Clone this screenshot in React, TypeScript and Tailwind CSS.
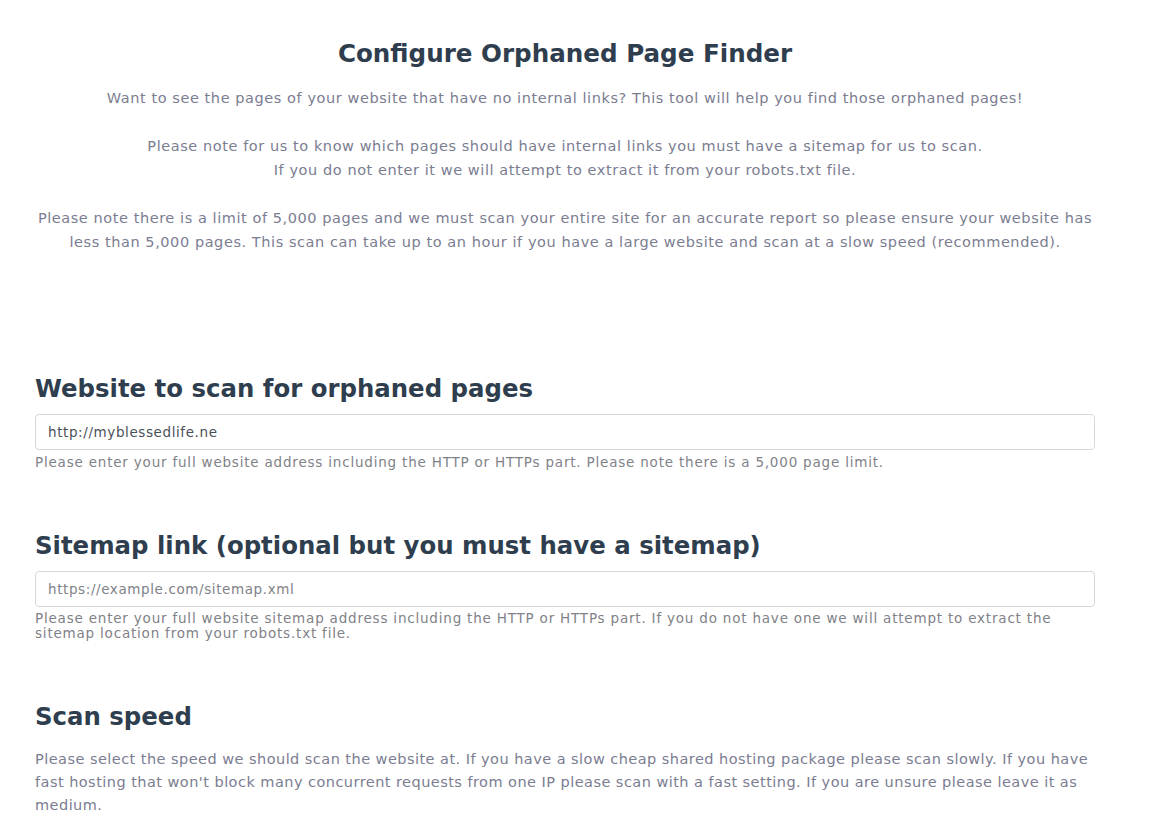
export default function App() {
  return (
    <div className="min-h-screen bg-white font-['DejaVu_Sans',sans-serif] text-[#7b7d91]">
      <div className="mx-[35px] w-[1060px]">
        {/* Intro */}
        <div className="pt-[38px] text-center">
          <h1 className="text-[24.6px] font-semibold leading-[32px] text-[#2f3e4e]">Configure Orphaned Page Finder</h1>
          <div className="mt-[16px] space-y-[24px] text-[14.5px] leading-[24px] tracking-[0.57px]">
            <p>Want to see the pages of your website that have no internal links? This tool will help you find those orphaned pages!</p>
            <p>
              Please note for us to know which pages should have internal links you must have a sitemap for us to scan.
              <br />
              If you do not enter it we will attempt to extract it from your robots.txt file.
            </p>
            <p>
              Please note there is a limit of 5,000 pages and we must scan your entire site for an accurate report so please ensure your website has less than 5,000 pages. This scan can take up to an hour if you have a large website and scan at a slow speed (recommended).
            </p>
          </div>
        </div>

        {/* Website field */}
        <div className="mt-[118px]">
          <h2 className="text-[24.4px] font-semibold leading-[34px] text-[#2f3e4e]">Website to scan for orphaned pages</h2>
          <input
            type="text"
            defaultValue="http://myblessedlife.ne"
            className="mt-[8px] block h-[36px] w-full rounded-[4px] border border-[#d5d8dc] px-[12px] text-[13.5px] tracking-[0.6px] text-[#4a5058] outline-none"
          />
          <p className="mt-[4px] text-[13.5px] leading-[16px] tracking-[0.8px] text-[#7f8288]">
            Please enter your full website address including the HTTP or HTTPs part. Please note there is a 5,000 page limit.
          </p>
        </div>

        {/* Sitemap field */}
        <div className="mt-[59px]">
          <h2 className="text-[24.4px] font-semibold leading-[34px] text-[#2f3e4e]">Sitemap link (optional but you must have a sitemap)</h2>
          <input
            type="text"
            placeholder="https://example.com/sitemap.xml"
            className="mt-[8px] block h-[36px] w-full rounded-[4px] border border-[#d5d8dc] px-[12px] text-[13.5px] tracking-[0.6px] text-[#4a5058] outline-none placeholder:text-[#7f8288]"
          />
          <p className="mt-[4px] text-[13.5px] leading-[15px] tracking-[0.8px] text-[#7f8288]">
            Please enter your full website sitemap address including the HTTP or HTTPs part. If you do not have one we will attempt to extract the sitemap location from your robots.txt file.
          </p>
        </div>

        {/* Scan speed */}
        <div className="mt-[59px]">
          <h2 className="text-[24.4px] font-semibold leading-[34px] text-[#2f3e4e]">Scan speed</h2>
          <p className="mt-[14px] text-[14.5px] leading-[23px] tracking-[0.46px]">
            Please select the speed we should scan the website at. If you have a slow cheap shared hosting package please scan slowly. If you have fast hosting that won't block many concurrent requests from one IP please scan with a fast setting. If you are unsure please leave it as medium.
          </p>
        </div>
      </div>
    </div>
  );
}
